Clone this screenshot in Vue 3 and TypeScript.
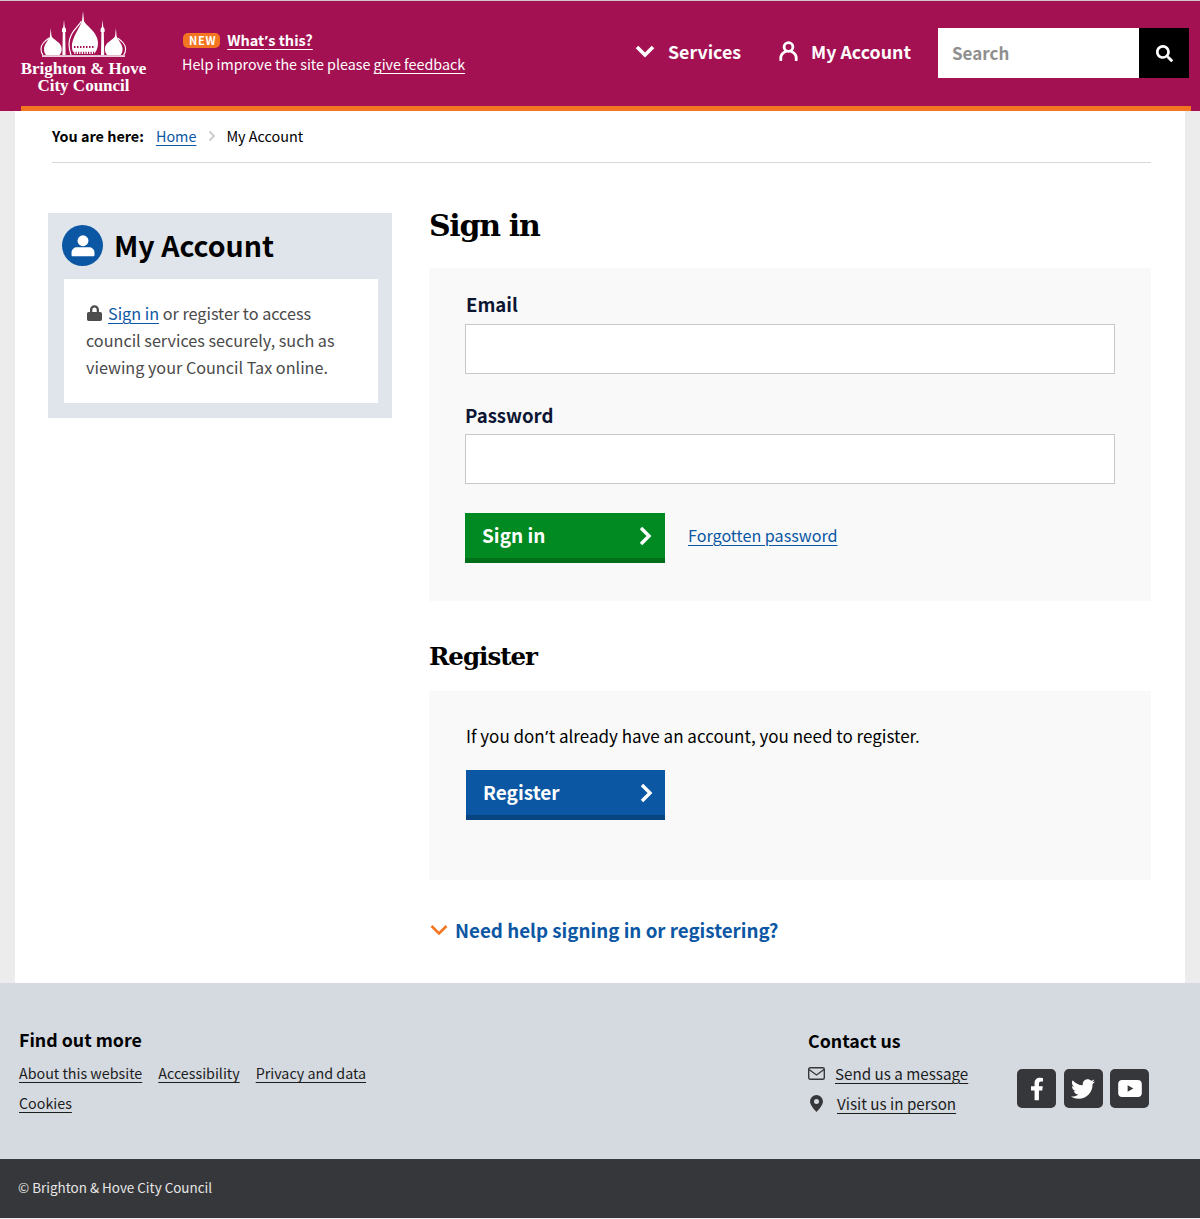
<script setup lang="ts">
const footerLinks = ['About this website', 'Accessibility', 'Privacy and data', 'Cookies']
</script>

<template>
  <div class="page">
    <header class="site-header">
      <a class="logo">
        <svg class="logo-art" width="92" height="48" viewBox="38 10 92 48" fill="#fff" aria-hidden="true">
          <g>
            <path d="M50.700 28l.8 8c1.500 4 10.200 6 10.200 13 0 3-1.200 5-2.200 6H46c-1-1-2-3-2-6 0-5 5-9 6-13z" />
            <path d="M49 38c-4 3-8 6-8 11 0 3 1 5 2 6" fill="none" stroke="#fff" stroke-width="1.100" />
            <path d="M64 20l.7 7 1.300 2v3h-.8l.4 23h-3.200l.4-23H62v-3l1.300-2z" />
          </g>
          <g transform="matrix(-1 0 0 1 166.600 0)">
            <path d="M50.700 28l.8 8c1.500 4 10.200 6 10.200 13 0 3-1.200 5-2.200 6H46c-1-1-2-3-2-6 0-5 5-9 6-13z" />
            <path d="M49 38c-4 3-8 6-8 11 0 3 1 5 2 6" fill="none" stroke="#fff" stroke-width="1.100" />
            <path d="M64 20l.7 7 1.300 2v3h-.8l.4 23h-3.200l.4-23H62v-3l1.300-2z" />
          </g>
          <path d="M83 11l1 10c2 5 14 11 14 22 0 5-2 9-4 11H74c-2-4-3-8-1-14 2-7 7-13 9-19z" />
          <path d="M81.500 21c-4 7-12.500 12-12.500 23 0 4 1 8 2 11" fill="none" stroke="#fff" stroke-width="1.200" />
          <path d="M74 47h21" stroke="#a41153" stroke-width="2" stroke-dasharray="1.500 1.500" />
          <path d="M73 53h23" stroke="#a41153" stroke-width="2.500" stroke-dasharray="1.200 1.300" />
          <rect x="42" y="55.300" width="83" height="1.500" />
        </svg>
        <span class="logo-text">Brighton &amp; Hove<br />City Council</span>
      </a>

      <div class="notice">
        <div class="notice-top">
          <span class="badge">NEW</span>
          <a class="notice-link">What<span class="apos">’</span>s this?</a>
        </div>
        <p>Help improve the site please <a>give feedback</a></p>
      </div>

      <nav class="nav">
        <a class="nav-item">
          <svg width="20" height="14" viewBox="0 0 20 14" aria-hidden="true">
            <path d="M2 3l8 8 8-8" fill="none" stroke="#fff" stroke-width="3.600" />
          </svg>
          Services
        </a>
        <a class="nav-item">
          <svg width="19" height="20" viewBox="0 0 19 20" aria-hidden="true">
            <circle cx="9.500" cy="6" r="4.400" fill="none" stroke="#fff" stroke-width="2.800" />
            <path d="M1.800 19v-2c0-3.500 2.500-5.500 4.700-6.500M17.200 19v-2c0-3.500-2.500-5.500-4.700-6.500" fill="none" stroke="#fff" stroke-width="2.800" stroke-linecap="round" />
          </svg>
          My Account
        </a>
      </nav>

      <form class="search" @submit.prevent>
        <input type="text" placeholder="Search" />
        <button type="submit" aria-label="Search">
          <svg width="17" height="17" viewBox="0 0 512 512" fill="#fff" aria-hidden="true">
            <path d="M505 442.700L405.300 343c-4.500-4.500-10.600-7-17-7H372c27.600-35.300 44-79.700 44-128C416 93.100 322.900 0 208 0S0 93.100 0 208s93.100 208 208 208c48.300 0 92.700-16.400 128-44v16.300c0 6.400 2.500 12.500 7 17l99.700 99.700c9.400 9.400 24.600 9.400 33.900 0l28.300-28.300c9.400-9.400 9.400-24.600.1-34zM208 336c-70.700 0-128-57.200-128-128 0-70.700 57.200-128 128-128 70.700 0 128 57.200 128 128 0 70.700-57.200 128-128 128z" />
          </svg>
        </button>
      </form>
      <div class="header-stripe"></div>
    </header>

    <main class="main">
      <div class="breadcrumb">
        <strong>You are here:</strong>
        <a>Home</a>
        <svg width="8" height="12" viewBox="0 0 8 12" aria-hidden="true">
          <path d="M1.500 1.500L6 6l-4.500 4.500" fill="none" stroke="#c9c9c9" stroke-width="1.800" />
        </svg>
        <span>My Account</span>
      </div>

      <div class="columns">
        <aside class="side">
          <div class="side-head">
            <span class="side-icon">
              <svg width="24" height="24" viewBox="0 0 22 22" fill="#fff" aria-hidden="true">
                <circle cx="11" cy="6.200" r="5" />
                <path d="M1.500 20.500c-.6 0-1-.4-1-1v-2.500c0-3 2.500-4.800 5-4.800h11c2.500 0 5 1.800 5 4.800v2.500c0 .6-.4 1-1 1z" />
              </svg>
            </span>
            <h2>My Account</h2>
          </div>
          <div class="side-body">
            <p>
              <svg class="lock" width="15" height="16" viewBox="0 0 15 16" fill="#4d4d4d" aria-hidden="true">
                <path d="M3 7V4.700a4.500 4.500 0 0 1 9 0V7h1.300c.9 0 1.700.8 1.700 1.700v5.600c0 .9-.8 1.700-1.700 1.700H1.700C.8 16 0 15.200 0 14.300V8.700C0 7.800.8 7 1.700 7zm2.300 0h4.400V4.700a2.200 2.200 0 0 0-4.400 0z" />
              </svg>
              <a>Sign in</a> or register to access council services securely, such as viewing your Council Tax online.
            </p>
          </div>
        </aside>

        <section class="content">
          <h1>Sign in</h1>
          <form class="panel signin" @submit.prevent>
            <label class="field-label email-label" for="email">Email</label>
            <input id="email" class="field" type="email" />
            <label class="field-label password-label" for="password">Password</label>
            <input id="password" class="field" type="password" />
            <div class="actions">
              <button class="btn btn-green" type="submit">
                Sign in
                <svg width="13" height="20" viewBox="0 0 13 20" aria-hidden="true">
                  <path d="M2 2l8 8-8 8" fill="none" stroke="#fff" stroke-width="3.400" />
                </svg>
              </button>
              <a class="forgot">Forgotten password</a>
            </div>
          </form>

          <h2 class="register-title">Register</h2>
          <div class="panel register">
            <p>If you don<span class="apos">’</span>t already have an account, you need to register.</p>
            <button class="btn btn-blue" type="button">
              Register
              <svg width="13" height="20" viewBox="0 0 13 20" aria-hidden="true">
                <path d="M2 2l8 8-8 8" fill="none" stroke="#fff" stroke-width="3.400" />
              </svg>
            </button>
          </div>

          <a class="help">
            <svg width="18" height="12" viewBox="0 0 18 12" aria-hidden="true">
              <path d="M1.500 2l7.500 7.500L16.500 2" fill="none" stroke="#f47521" stroke-width="2.600" />
            </svg>
            Need help signing in or registering?
          </a>
        </section>
      </div>
    </main>

    <footer>
      <div class="footer-top">
        <div class="find-out">
          <h3>Find out more</h3>
          <ul>
            <li v-for="link in footerLinks" :key="link"><a>{{ link }}</a></li>
          </ul>
        </div>
        <div class="contact">
          <h3>Contact us</h3>
          <div class="contact-row">
            <svg width="17" height="13" viewBox="0 0 17 13" aria-hidden="true">
              <rect x=".7" y=".7" width="15.600" height="11.600" rx="1.500" fill="none" stroke="#36373a" stroke-width="1.400" />
              <path d="M1 2.500l7.500 5.500L16 2.500" fill="none" stroke="#36373a" stroke-width="1.400" />
            </svg>
            <a>Send us a message</a>
          </div>
          <div class="contact-row row-pin">
            <svg width="13" height="17" viewBox="0 0 13 17" fill="#36373a" aria-hidden="true">
              <path fill-rule="evenodd" d="M6.500 0A6.500 6.500 0 0 1 13 6.500C13 10 8.500 15 6.500 17 4.500 15 0 10 0 6.500A6.500 6.500 0 0 1 6.500 0zm0 4a2.500 2.500 0 1 0 0 5 2.500 2.500 0 0 0 0-5z" />
            </svg>
            <a>Visit us in person</a>
          </div>
        </div>
        <div class="social">
          <a aria-label="Facebook">
            <svg width="14" height="24" viewBox="0 0 320 512" fill="#fff" aria-hidden="true">
              <path d="M279.140 288l14.220-92.660h-88.910v-60.130c0-25.350 12.420-50.060 52.240-50.060h40.420V6.260S260.430 0 225.360 0c-73.220 0-121.080 44.380-121.080 124.720v70.620H22.890V288h81.390v224h100.170V288z" />
            </svg>
          </a>
          <a aria-label="Twitter">
            <svg width="24" height="24" viewBox="0 0 512 512" fill="#fff" aria-hidden="true">
              <path d="M459.370 151.716c.325 4.548.325 9.097.325 13.645 0 138.720-105.583 298.558-298.558 298.558-59.452 0-114.680-17.219-161.137-47.106 8.447.974 16.568 1.299 25.340 1.299 49.055 0 94.213-16.568 130.274-44.832-46.132-.975-84.792-31.188-98.112-72.772 6.498.974 12.995 1.624 19.818 1.624 9.421 0 18.843-1.300 27.614-3.573-48.081-9.747-84.143-51.980-84.143-102.985v-1.299c13.969 7.797 30.214 12.670 47.431 13.319-28.264-18.843-46.781-51.005-46.781-87.391 0-19.492 5.197-37.360 14.294-52.954 51.655 63.675 129.300 105.258 216.365 109.807-1.624-7.797-2.599-15.918-2.599-24.040 0-57.828 46.782-104.934 104.934-104.934 30.213 0 57.502 12.670 76.670 33.137 23.715-4.548 46.456-13.320 66.599-25.340-7.798 24.366-24.366 44.833-46.132 57.827 21.117-2.273 41.584-8.122 60.426-16.243-14.292 20.791-32.161 39.308-52.628 54.253z" />
            </svg>
          </a>
          <a aria-label="YouTube">
            <svg width="24" height="17" viewBox="0 0 25 18" fill="#fff" aria-hidden="true">
              <path fill-rule="evenodd" d="M4 0h17c2.200 0 4 1.800 4 4v10c0 2.200-1.800 4-4 4H4c-2.200 0-4-1.800-4-4V4c0-2.200 1.800-4 4-4zm6 5.500v7l6-3.500z" />
            </svg>
          </a>
        </div>
      </div>
      <div class="footer-bottom">© Brighton &amp; Hove City Council</div>
    </footer>
  </div>
</template>

<style scoped>
.page {
  background: #ececec;
  font-family: "Noto Sans CJK SC", "Noto Sans", sans-serif;
  color: #000;
  height: 1219px;
  overflow: hidden;
}

.apos {
  font-family: "Noto Sans", sans-serif;
  margin: 0 .5px;
  line-height: 1;
}

a {
  color: #0b57a4;
  text-decoration: underline;
  text-underline-offset: 3px;
  text-decoration-thickness: 1px;
}

/* header */
.site-header {
  position: relative;
  height: 110px;
  background: #a41153;
  border-top: 1px solid #cfc5ca;
  display: flex;
  align-items: flex-start;
}

.header-stripe {
  position: absolute;
  left: 21px;
  width: 1170px;
  bottom: 0;
  height: 5px;
  background: #f47521;
}

.logo {
  width: 125px;
  margin: 9px 0 0 21px;
  display: flex;
  flex-direction: column;
  align-items: center;
  color: #fff;
  text-decoration: none;
}

.logo-art {
  display: block;
}

.logo-text {
  font-family: "Liberation Serif", serif;
  font-weight: 700;
  font-size: 17px;
  line-height: 17px;
  text-align: center;
  white-space: nowrap;
  margin-top: 2px;
}

.notice {
  margin: 27px 0 0 36px;
  color: #fff;
  font-size: 14.300px;
  line-height: 24px;
}

.notice a {
  color: #fff;
}

.notice p {
  margin: 0;
}

.notice-top {
  display: flex;
  align-items: center;
  gap: 7px;
  height: 24px;
}

.badge {
  margin-left: 1px;
  background: #f47521;
  color: #fff;
  font-size: 11px;
  font-weight: 700;
  line-height: 15px;
  letter-spacing: .7px;
  padding: 0 4px 0 6px;
  border-radius: 5px;
}

.notice-link {
  font-size: 14.500px;
  font-weight: 700;
}

.nav {
  position: absolute;
  left: 635px;
  top: 35px;
  display: flex;
  gap: 38px;
}

.nav-item {
  display: flex;
  align-items: center;
  gap: 13px;
  color: #fff;
  font-size: 17.800px;
  font-weight: 700;
  line-height: 30px;
  text-decoration: none;
}

.search {
  position: absolute;
  left: 938px;
  top: 27px;
  display: flex;
  width: 251px;
  height: 50px;
  margin: 0;
}

.search input {
  flex: 1;
  min-width: 0;
  border: 0;
  padding: 0 14px 2px;
  font: 700 17px "Noto Sans CJK SC", sans-serif;
  background: #fff;
  outline: 0;
}

.search input::placeholder {
  color: #8f8f8f;
  opacity: 1;
}

.search button {
  width: 50px;
  border: 0;
  background: #000;
  padding: 0;
  display: flex;
  align-items: center;
  justify-content: center;
}

/* main */
.main {
  margin: 0 15px;
  background: #fff;
  height: 872px;
  padding: 0 34px 0 33px;
  overflow: hidden;
}

.breadcrumb {
  margin-left: 4px;
  height: 49px;
  padding-bottom: 2px;
  border-bottom: 1px solid #d8d8d8;
  display: flex;
  align-items: center;
  font-size: 14.400px;
}

.breadcrumb a {
  margin-left: 12px;
}

.breadcrumb svg {
  margin: 0 10px 0 12px;
}

.breadcrumb strong {
  font-weight: 700;
}

.columns {
  display: grid;
  grid-template-columns: 344px 722px;
  gap: 37px;
}

.side {
  margin-top: 50px;
  background: #dfe5eb;
  height: 205px;
  box-sizing: border-box;
  padding-bottom: 15px;
}

.side-head {
  height: 66px;
  display: flex;
  align-items: center;
  padding-left: 14px;
  gap: 11px;
}

.side-icon {
  width: 41px;
  height: 41px;
  border-radius: 50%;
  background: #0b57a4;
  display: flex;
  align-items: center;
  justify-content: center;
  margin-top: -1px;
}

.side-head h2 {
  margin: -3px 0 0;
  font-size: 28.500px;
  font-weight: 700;
  line-height: 40px;
}

.side-body {
  margin-left: 16px;
  width: 314px;
  height: 124px;
  box-sizing: border-box;
  background: #fff;
  padding: 21px 20px 0 22px;
  color: #4a4a4a;
  font-size: 16.200px;
  line-height: 27px;
}

.side-body p {
  margin: 0;
}

.lock {
  vertical-align: -1px;
  margin: 0 6px 0 1px;
}

.content h1 {
  margin: 0;
  padding-top: 41px;
  height: 105px;
  box-sizing: border-box;
  font-family: "DejaVu Serif", serif;
  font-size: 30px;
  line-height: 44px;
  font-weight: 700;
  letter-spacing: -1.300px;
}

.panel {
  background: #f9f9f9;
  box-sizing: border-box;
}

.signin {
  height: 333px;
  padding-left: 36px;
  padding-right: 36px;
}

.field-label {
  display: block;
  font-size: 18.600px;
  font-weight: 700;
  line-height: 30px;
  color: #0c1633;
}

.email-label {
  padding: 21px 0 5px 1px;
}

.password-label {
  padding: 26px 0 4px;
}

.field {
  display: block;
  box-sizing: border-box;
  width: 100%;
  height: 50px;
  border: 1px solid #c8c8c8;
  background: #fff;
  outline: 0;
  padding: 0 12px;
}

.actions {
  display: flex;
  align-items: center;
  gap: 23px;
  margin-top: 29px;
}

.btn {
  box-sizing: border-box;
  width: 200px;
  height: 50px;
  border: 0;
  color: #fff;
  font: 700 19px "Noto Sans CJK SC", sans-serif;
  display: flex;
  align-items: center;
  justify-content: space-between;
  padding: 0 13px 3px 17px;
}

.btn svg {
  margin-top: 3px;
}

.btn-green {
  background: #008a21;
  border-bottom: 5px solid #006f1a;
}

.btn-blue {
  width: 199px;
  padding-right: 12px;
  background: #0b57a4;
  border-bottom: 5px solid #08447f;
}

.forgot {
  font-size: 16.150px;
  margin-bottom: 7px;
}

.register-title {
  margin: 0;
  height: 90px;
  box-sizing: border-box;
  padding-top: 36px;
  font-family: "DejaVu Serif", serif;
  font-size: 24.500px;
  line-height: 40px;
  font-weight: 700;
  letter-spacing: -1px;
}

.register {
  height: 189px;
  padding: 30px 0 0 37px;
}

.register p {
  height: 30px;
  margin: 0 0 19px;
  font-size: 17px;
  line-height: 30px;
}

.help {
  display: flex;
  align-items: center;
  gap: 7px;
  margin-top: 34px;
  padding-left: 1px;
  font-size: 18.750px;
  font-weight: 700;
  line-height: 32px;
  text-decoration: none;
}

/* footer */
footer {
  color: #000;
}

.footer-top {
  height: 176px;
  background: #d5dae1;
  box-sizing: border-box;
  padding: 41px 0 0 19px;
  display: flex;
}

footer a {
  color: #1c1c1c;
}

footer h3 {
  margin: 0;
  font-size: 17.800px;
  font-weight: 700;
  line-height: 30px;
}

.find-out {
  width: 789px;
}

.find-out ul {
  list-style: none;
  margin: 7px 0 0;
  padding: 0;
  width: 400px;
  display: flex;
  flex-wrap: wrap;
  column-gap: 16px;
  row-gap: 6px;
  font-size: 14.300px;
  line-height: 24px;
}

.contact {
  width: 209px;
  padding-top: 1px;
}

.contact-row {
  display: flex;
  align-items: center;
  gap: 10px;
  font-size: 15.200px;
  line-height: 30px;
}

.contact-row:first-of-type {
  margin-top: 3px;
}

.row-pin {
  gap: 14px;
  padding-left: 2px;
}

.social {
  display: flex;
  gap: 7.500px;
  margin-top: 45px;
  height: 39px;
}

.social a {
  width: 39px;
  height: 39px;
  border-radius: 5px;
  background: #36373a;
  display: flex;
  align-items: center;
  justify-content: center;
}

.footer-bottom {
  height: 59px;
  background: #36373a;
  color: #e6e6e6;
  font-size: 13.450px;
  line-height: 56px;
  padding-left: 18px;
}
</style>

<style>
html,
body {
  margin: 0;
  background: #fff;
}
</style>
